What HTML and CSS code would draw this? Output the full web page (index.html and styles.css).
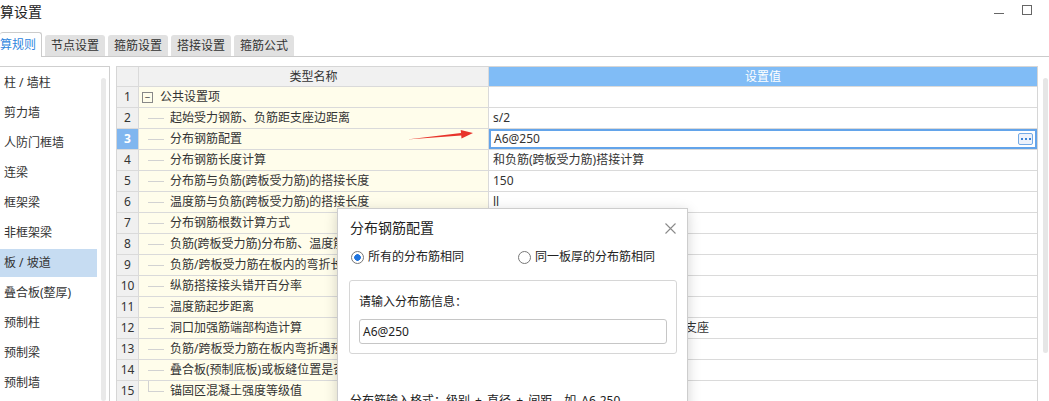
FILE: index.html
```html
<!DOCTYPE html>
<html>

<head>
    <meta charset="utf-8">
    <title>计算设置</title>
    <link rel="stylesheet" href="styles.css">
</head>

<body>
    <div class="titlebar">
        <span class="title">算设置</span>
        <div class="win-btns">
            <span class="win-min"></span>
            <span class="win-max"></span>
        </div>
    </div>

    <ul class="tabs">
        <li class="tab active">算规则</li>
        <li class="tab">节点设置</li>
        <li class="tab">箍筋设置</li>
        <li class="tab">搭接设置</li>
        <li class="tab">箍筋公式</li>
    </ul>

    <div class="main">
        <div class="sidebar">
            <ul class="nav">
                <li>柱 / 墙柱</li>
                <li>剪力墙</li>
                <li>人防门框墙</li>
                <li>连梁</li>
                <li>框架梁</li>
                <li>非框架梁</li>
                <li class="current">板 / 坡道</li>
                <li>叠合板(整厚)</li>
                <li>预制柱</li>
                <li>预制梁</li>
                <li>预制墙</li>
            </ul>
            <div class="side-scroll"></div>
        </div>

        <div class="grid">
            <div class="row head">
                <div class="num"></div>
                <div class="name">类型名称</div>
                <div class="val">设置值</div>
            </div>
            <div class="row">
                <div class="num">1</div>
                <div class="name"><span class="toggle">−</span><span class="group-title">公共设置项</span></div>
                <div class="val"></div>
            </div>
            <div class="row">
                <div class="num">2</div>
                <div class="name"><span class="branch"></span>起始受力钢筋、负筋距支座边距离</div>
                <div class="val">s/2</div>
            </div>
            <div class="row">
                <div class="num selected">3</div>
                <div class="name"><span class="branch"></span>分布钢筋配置</div>
                <div class="val editing">A6@250<span class="more"><i></i><i></i><i></i></span></div>
            </div>
            <div class="row">
                <div class="num">4</div>
                <div class="name"><span class="branch"></span>分布钢筋长度计算</div>
                <div class="val">和负筋(跨板受力筋)搭接计算</div>
            </div>
            <div class="row">
                <div class="num">5</div>
                <div class="name"><span class="branch"></span>分布筋与负筋(跨板受力筋)的搭接长度</div>
                <div class="val">150</div>
            </div>
            <div class="row">
                <div class="num">6</div>
                <div class="name"><span class="branch"></span>温度筋与负筋(跨板受力筋)的搭接长度</div>
                <div class="val">ll</div>
            </div>
            <div class="row">
                <div class="num">7</div>
                <div class="name"><span class="branch"></span>分布钢筋根数计算方式</div>
                <div class="val">向下取整+1</div>
            </div>
            <div class="row">
                <div class="num">8</div>
                <div class="name"><span class="branch"></span>负筋(跨板受力筋)分布筋、温度筋是否带弯勾</div>
                <div class="val">否</div>
            </div>
            <div class="row">
                <div class="num">9</div>
                <div class="name"><span class="branch"></span>负筋/跨板受力筋在板内的弯折长度</div>
                <div class="val">板厚-2*保护层</div>
            </div>
            <div class="row">
                <div class="num">10</div>
                <div class="name"><span class="branch"></span>纵筋搭接接头错开百分率</div>
                <div class="val">50%</div>
            </div>
            <div class="row">
                <div class="num">11</div>
                <div class="name"><span class="branch"></span>温度筋起步距离</div>
                <div class="val">s</div>
            </div>
            <div class="row">
                <div class="num">12</div>
                <div class="name"><span class="branch"></span>洞口加强筋端部构造计算</div>
                <div class="val">按锚固长度伸入板内，不足时弯折入支座</div>
            </div>
            <div class="row">
                <div class="num">13</div>
                <div class="name"><span class="branch"></span>负筋/跨板受力筋在板内弯折遇预制板时</div>
                <div class="val">否</div>
            </div>
            <div class="row">
                <div class="num">14</div>
                <div class="name"><span class="branch"></span>叠合板(预制底板)或板缝位置是否计算分布筋</div>
                <div class="val">是</div>
            </div>
            <div class="row">
                <div class="num">15</div>
                <div class="name"><span class="branch last"></span>锚固区混凝土强度等级值</div>
                <div class="val">C30</div>
            </div>
        </div>
        <div class="grid-scroll"></div>
    </div>

    <!-- red pointer next to the edited cell -->
    <svg class="pointer" width="72" height="16" viewBox="0 0 72 16">
        <polygon points="2,13.6 56,7.1 55.7,3.9 68,7 56.5,12.4 56.2,9.4" fill="#e8342b" />
    </svg>

    <div class="dialog">
        <div class="dlg-head">
            <span class="dlg-title">分布钢筋配置</span>
            <svg class="dlg-close" width="11" height="11" viewBox="0 0 11 11">
                <path d="M0.5 0.5 L10.5 10.5 M10.5 0.5 L0.5 10.5" stroke="#8a8a8a" stroke-width="1.1" fill="none" />
            </svg>
        </div>
        <div class="radios">
            <label class="radio first"><span class="dot on"></span>所有的分布筋相同</label>
            <label class="radio"><span class="dot"></span>同一板厚的分布筋相同</label>
        </div>
        <div class="input-box">
            <div class="input-label">请输入分布筋信息：</div>
            <div class="input">A6@250</div>
        </div>
        <div class="hint">分布筋输入格式：级别 + 直径 + 间距，如 A6-250</div>
    </div>
</body>

</html>
```

FILE: styles.css
```css
body {
    margin: 0;
    font-family: "Noto Sans", "Noto Sans CJK SC", sans-serif;
    font-size: 12px;
    color: #333;
    background-color: #fff;
    overflow: hidden;
    height: 401px;
}

ul {
    list-style-type: none;
    margin: 0;
    padding: 0;
}

/* window title */
.titlebar {
    height: 28px;
    display: flex;
    justify-content: space-between;
}

.title {
    font-size: 14px;
    line-height: 24px;
    color: #222;
}

.win-btns {
    display: flex;
    align-items: flex-start;
    padding-right: 17px;
}

.win-min {
    width: 10px;
    height: 1px;
    margin-top: 13px;
    background-color: #666;
}

.win-max {
    width: 10px;
    height: 10px;
    margin-top: 5px;
    margin-left: 18px;
    box-sizing: border-box;
    border: 1px solid #666;
}

/* tabs */
.tabs {
    height: 28px;
    display: flex;
    align-items: flex-end;
    gap: 3px;
    border-bottom: 1px solid #cbcbcb;
}

.tab {
    width: 60px;
    height: 21px;
    line-height: 21px;
    text-align: center;
    background-color: #e1e1e1;
    border-radius: 3px 3px 0 0;
    color: #333;
}

.tab.active {
    width: 42px;
    height: 25px;
    margin-bottom: -1px;
    box-sizing: border-box;
    line-height: 24px;
    text-align: left;
    background-color: #fff;
    border: 1px solid #cbcbcb;
    border-left: none;
    border-bottom: none;
    color: #2f86de;
}

.main {
    display: flex;
    padding-top: 9px;
    height: 335px;
}

/* left category list */
.sidebar {
    width: 110px;
    box-sizing: border-box;
    border-top: 1px solid #cfcfcf;
    border-right: 1px solid #cfcfcf;
    display: flex;
}

.nav {
    width: 97px;
    padding-top: 2px;
}

.nav li {
    height: 28px;
    line-height: 28px;
    margin-bottom: 2px;
    padding-left: 4px;
    white-space: nowrap;
}

.nav li.current {
    background-color: #c6dcf2;
}

.side-scroll {
    width: 5px;
    margin-left: 4px;
    margin-top: 11px;
    background-color: #e9e9e9;
    border-radius: 3px;
}

/* settings grid */
.grid {
    width: 922px;
    margin-left: 6px;
    box-sizing: border-box;
    border-top: 1px solid #d6d6d6;
    border-left: 1px solid #d6d6d6;
    border-right: 1px solid #d6d6d6;
    align-self: flex-start;
}

.row {
    display: grid;
    grid-template-columns: 22px 350px 1fr;
    height: 21px;
    box-sizing: border-box;
    border-bottom: 1px solid #dadada;
}

.row.head {
    height: 20px;
}

.row > div {
    line-height: 20px;
    white-space: nowrap;
    overflow: hidden;
}

.num {
    background-color: #f0f0f0;
    border-right: 1px solid #dadada;
    text-align: center;
}

.num.selected {
    background-color: #80b6ef;
    color: #fff;
    font-weight: bold;
}

.name {
    background-color: #fffdeb;
    border-right: 1px solid #dadada;
    display: flex;
    align-items: center;
}

.head .num,
.head .name {
    background-color: #f1f1f1;
    justify-content: center;
}

.head .val {
    background-color: #80bcf6;
    color: #fff;
    justify-content: center;
    padding-left: 0;
}

.toggle {
    width: 11px;
    height: 11px;
    margin-left: 3px;
    box-sizing: border-box;
    border: 1px solid #888;
    font-size: 10px;
    line-height: 9px;
    text-align: center;
    color: #444;
}

.group-title {
    margin-left: 7px;
}

/* tree connector in front of each child item */
.branch {
    width: 16px;
    height: 20px;
    margin-left: 9px;
    margin-right: 6px;
    flex-shrink: 0;
    background: linear-gradient(#d2d2d2, #d2d2d2) no-repeat 0 50% / 100% 1px;
}

.branch.last {
    background:
        linear-gradient(#d2d2d2, #d2d2d2) no-repeat 0 50% / 100% 1px,
        linear-gradient(#d2d2d2, #d2d2d2) no-repeat 0 0 / 1px 50%;
}

.val {
    padding-left: 4px;
    display: flex;
    align-items: center;
}

.val.editing {
    box-shadow: inset 0 0 0 2px #63a4ea;
    padding-left: 5px;
}

.more {
    margin-left: auto;
    margin-right: 4px;
    width: 15px;
    height: 12px;
    box-sizing: border-box;
    border: 1px solid #74aae6;
    border-radius: 2px;
    background-color: #edf2fb;
    display: flex;
    justify-content: center;
    align-items: center;
    gap: 2px;
}

.more i {
    width: 2px;
    height: 2px;
    background-color: #3b84d6;
}

.grid-scroll {
    width: 5px;
    height: 275px;
    margin-left: 5px;
    margin-top: 12px;
    background-color: #e6e6e6;
    border-radius: 3px;
}

.pointer {
    position: absolute;
    left: 405px;
    top: 126px;
}

/* popup editor */
.dialog {
    position: absolute;
    left: 337px;
    top: 208px;
    width: 351px;
    height: 220px;
    box-sizing: border-box;
    padding: 11px 11px 0 12px;
    background-color: #fff;
    border: 1px solid #cdcdcd;
    box-shadow: 0 3px 12px rgba(0, 0, 0, 0.18);
    color: #222;
}

.dlg-head {
    display: flex;
    justify-content: space-between;
    align-items: center;
    height: 16px;
}

.dlg-title {
    font-size: 14px;
    line-height: 16px;
}

.radios {
    display: flex;
    margin-top: 13px;
    height: 16px;
}

.radio {
    display: flex;
    align-items: center;
    line-height: 16px;
}

.radio.first {
    width: 167px;
}

.dot {
    width: 13px;
    height: 13px;
    margin-left: 1px;
    margin-right: 4px;
    box-sizing: border-box;
    border: 1px solid #777;
    border-radius: 50%;
    background-color: #fff;
}

.dot.on {
    background: radial-gradient(circle, #1f74df 0 3px, #fff 3.6px);
}

.input-box {
    margin-top: 15px;
    margin-left: -1px;
    width: 328px;
    box-sizing: border-box;
    border: 1px solid #d6d6d6;
    border-radius: 3px;
    padding: 13px 9px 9px 9px;
}

.input-label {
    line-height: 16px;
}

.input {
    margin-top: 9px;
    height: 25px;
    box-sizing: border-box;
    border: 1px solid #c6c6c6;
    border-radius: 3px;
    padding-left: 3px;
    line-height: 23px;
}

.hint {
    margin-top: 39px;
    line-height: 16px;
    white-space: nowrap;
    word-spacing: 2px;
}
```
